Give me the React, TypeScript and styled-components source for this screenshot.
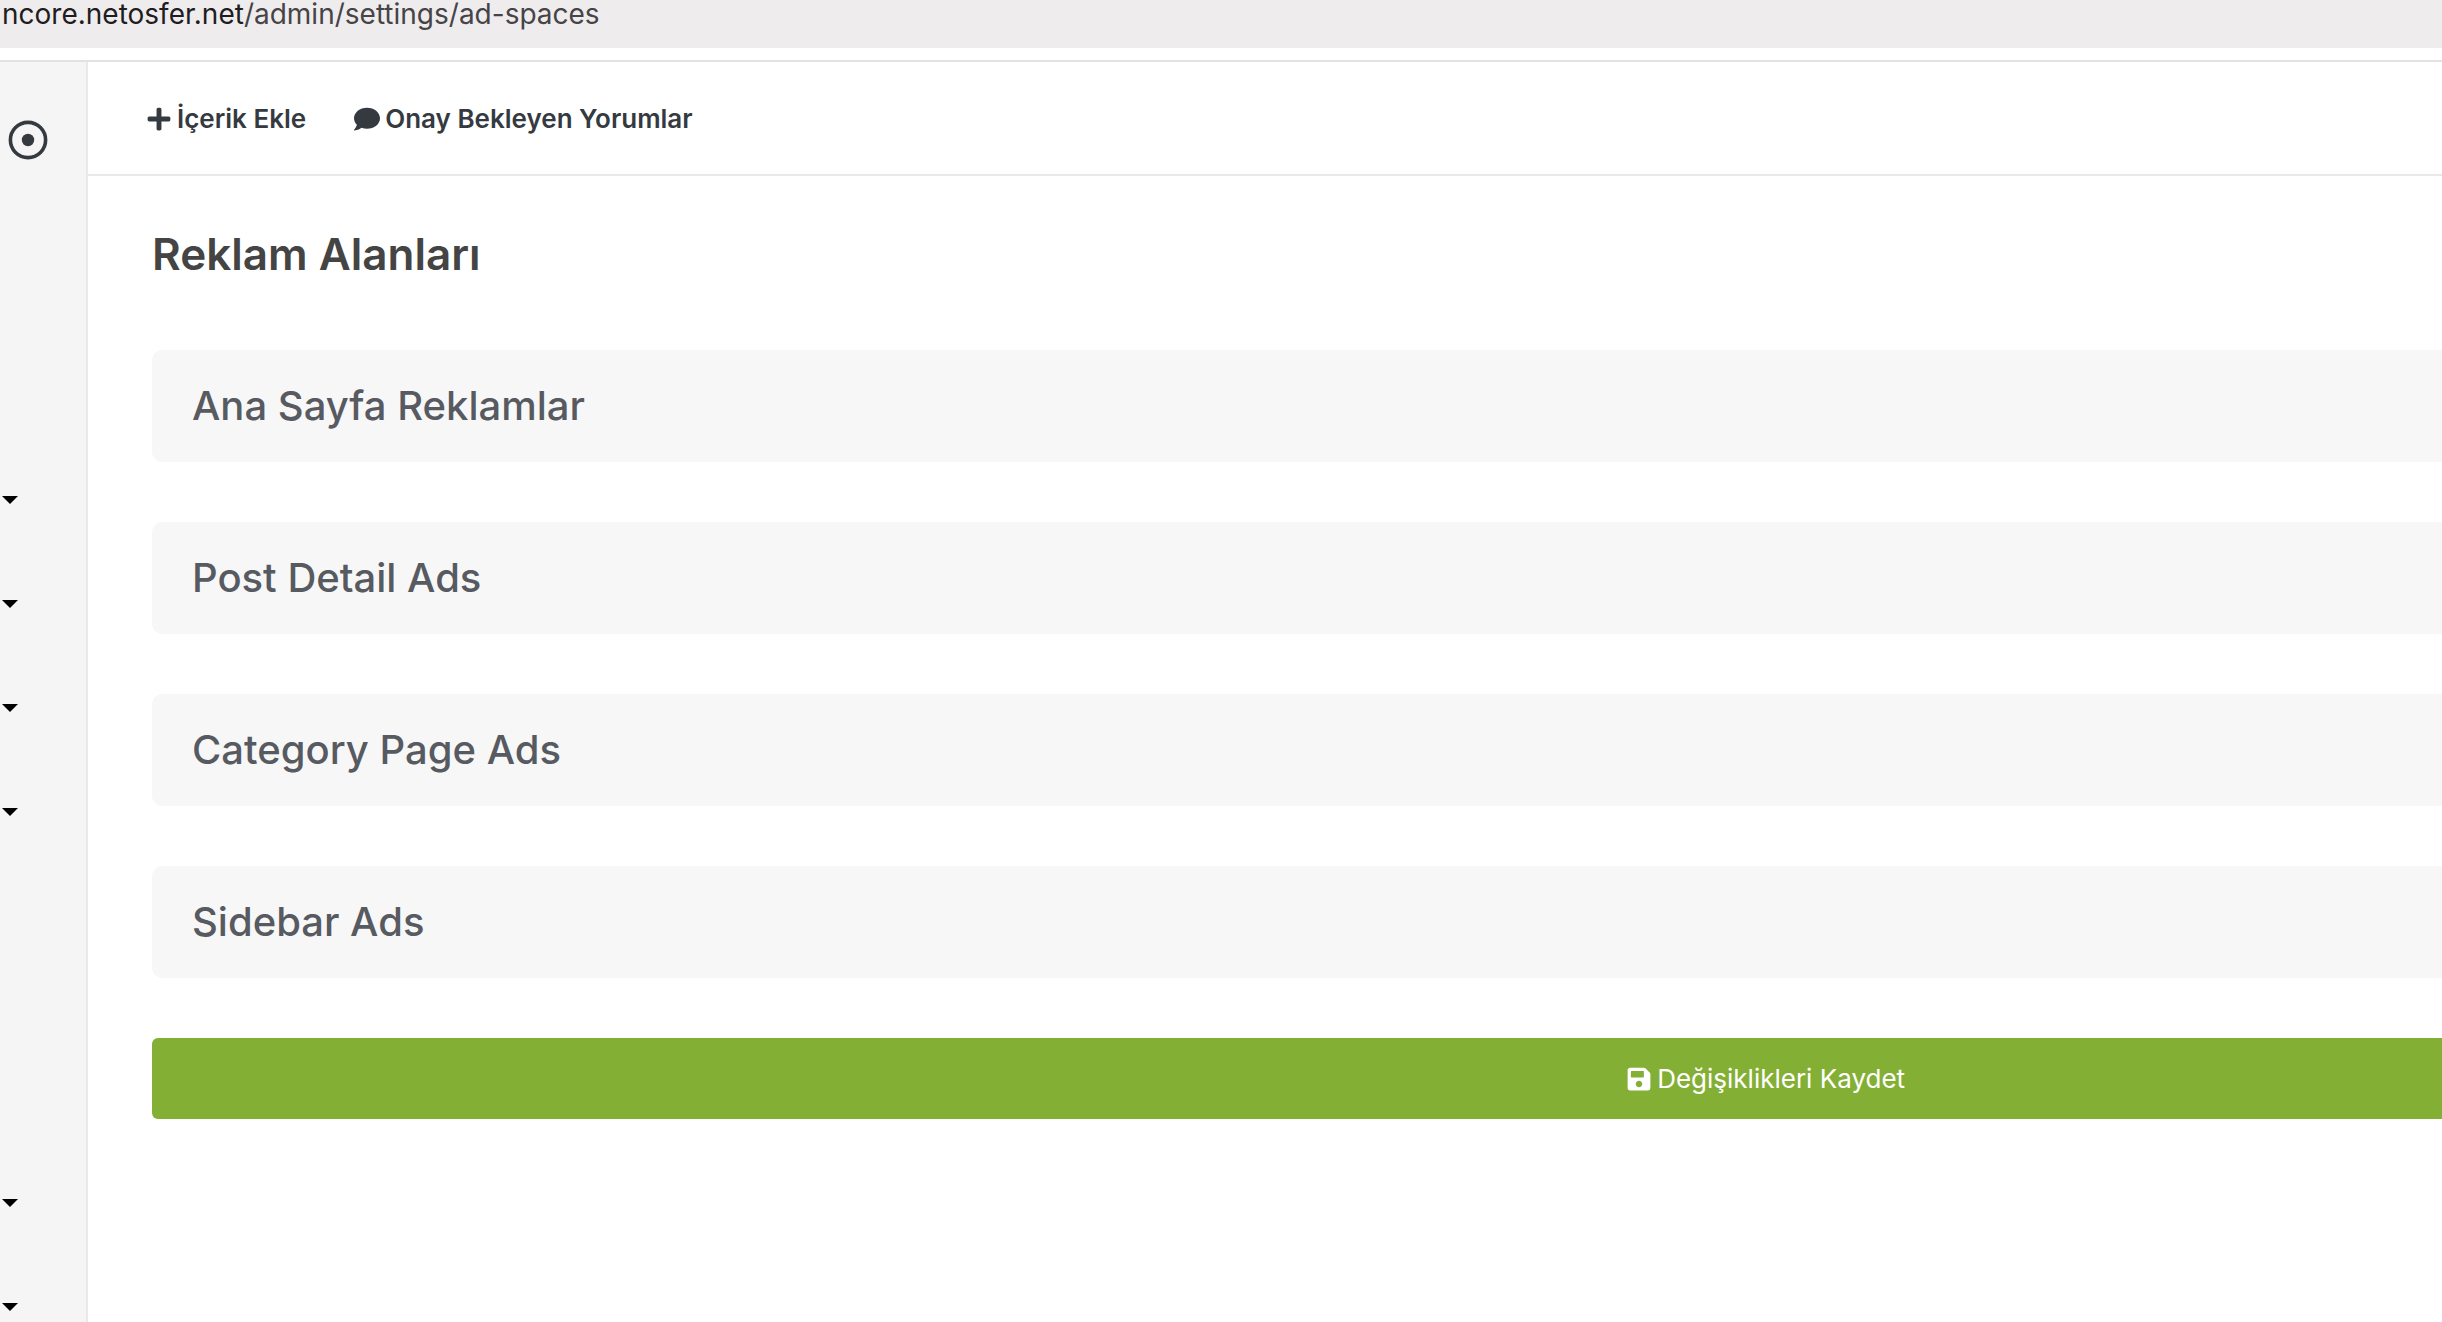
import React from "react";
import styled, { createGlobalStyle } from "styled-components";
import { FaPlus, FaComment, FaSave } from "react-icons/fa";

const GlobalStyle = createGlobalStyle`
  *, *::before, *::after { box-sizing: border-box; }
  html, body { margin: 0; background: #fff; }
  body { overflow: hidden; font-family: Inter, "Liberation Sans", sans-serif; }
  button { font-family: inherit; cursor: pointer; }
`;

const Shell = styled.div`
  display: flex;
  flex-direction: column;
  height: 100vh;
  overflow: hidden;
`;

const AddressBar = styled.div`
  flex: none;
  height: 48px;
  padding: 0 2px;
  background: #efecee;
  color: #464446;
  font-size: 28px;
  line-height: 28px;
  white-space: nowrap;
`;

const Host = styled.span`
  color: #1f1d1f;
`;

const Workspace = styled.div`
  display: flex;
  flex: 1;
  min-height: 0;
  width: 141%;
  margin-top: 12px;
  border-top: 2px solid #e2e2e2;
`;

const Sidebar = styled.aside`
  display: flex;
  flex-direction: column;
  flex: none;
  width: 88px;
  overflow: hidden;
  background: #f5f5f5;
  border-right: 2px solid #e9e9e9;
`;

const PinButton = styled.button`
  display: flex;
  flex: none;
  margin: 56px 0 0 6px;
  padding: 0;
  width: 44px;
  height: 44px;
  border: 0;
  background: none;
  color: #343a40;
`;

const MenuGroup = styled.nav<{ $gap: number }>`
  flex: none;
  margin-top: ${(p) => p.$gap}px;
`;

const MenuToggle = styled.button`
  display: flex;
  align-items: center;
  width: 100%;
  height: 104px;
  padding: 0 2px;
  border: 0;
  background: none;

  &::after {
    content: "";
    border: 8px solid transparent;
    border-top-color: #000;
    border-bottom: 0;
  }
`;

const Content = styled.div`
  flex: 1;
  min-width: 0;
`;

const TopBar = styled.header`
  display: flex;
  align-items: center;
  gap: 48px;
  height: 114px;
  padding: 2px 58px 0;
  border-bottom: 2px solid #e9e9e9;
`;

const TopLink = styled.a`
  display: flex;
  align-items: center;
  gap: 5px;
  color: #343a40;
  font-size: 26px;
  font-weight: 600;
  line-height: 40px;
  text-decoration: none;
`;

const Main = styled.main`
  display: flex;
  flex-direction: column;
  gap: 60px;
  padding: 51px 64px;
`;

const Title = styled.h1`
  margin: 0 0 9px;
  color: #444;
  font-size: 44px;
  font-weight: 600;
  line-height: 54px;
`;

const Panel = styled.button`
  height: 112px;
  padding: 0 40px;
  border: 0;
  border-radius: 10px;
  background: #f7f7f7;
  color: #575a61;
  font-size: 40px;
  font-weight: 500;
  line-height: 48px;
  text-align: left;
`;

const SaveButton = styled.button`
  display: flex;
  align-items: center;
  justify-content: center;
  gap: 5px;
  height: 81px;
  padding: 0;
  border: 0;
  border-radius: 6px;
  background: #84af35;
  color: #fff;
  font-size: 26px;
  font-weight: 400;
  line-height: 40px;
`;

const panels = ["Ana Sayfa Reklamlar", "Post Detail Ads", "Category Page Ads", "Sidebar Ads"];
const menuGroups = [
  { gap: 286, items: ["İçerik", "Kategoriler", "Yorumlar", "Üyeler"] },
  { gap: 287, items: ["Ayarlar", "Araçlar"] },
];

export default function App() {
  return (
    <>
      <GlobalStyle />
      <Shell>
        <AddressBar>
          <Host>ncore.netosfer.net</Host>/admin/settings/ad-spaces
        </AddressBar>
        <Workspace>
          <Sidebar>
            <PinButton type="button" aria-label="Menüyü sabitle">
              <svg width="44" height="44" viewBox="0 0 44 44" aria-hidden="true">
                <circle cx="22" cy="22" r="17.6" fill="none" stroke="currentColor" strokeWidth="3.6" />
                <circle cx="22" cy="22" r="6.2" fill="currentColor" />
              </svg>
            </PinButton>
            {menuGroups.map((group) => (
              <MenuGroup key={group.gap} $gap={group.gap}>
                {group.items.map((item) => (
                  <MenuToggle key={item} type="button" aria-label={item} />
                ))}
              </MenuGroup>
            ))}
          </Sidebar>
          <Content>
            <TopBar>
              <TopLink href="#add">
                <FaPlus aria-hidden="true" />
                İçerik Ekle
              </TopLink>
              <TopLink href="#comments">
                <FaComment aria-hidden="true" />
                Onay Bekleyen Yorumlar
              </TopLink>
            </TopBar>
            <Main>
              <Title>Reklam Alanları</Title>
              {panels.map((name) => (
                <Panel key={name} type="button">
                  {name}
                </Panel>
              ))}
              <SaveButton type="button">
                <FaSave aria-hidden="true" />
                Değişiklikleri Kaydet
              </SaveButton>
            </Main>
          </Content>
        </Workspace>
      </Shell>
    </>
  );
}
